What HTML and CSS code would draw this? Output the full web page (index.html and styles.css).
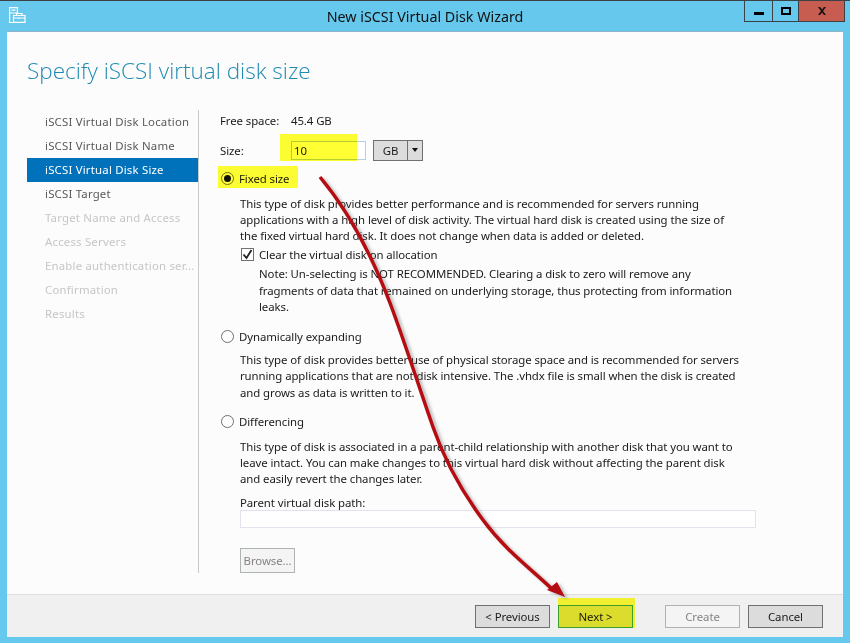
FILE: index.html
```html
<!DOCTYPE html>
<html lang="en">
<head>
<meta charset="utf-8">
<title>New iSCSI Virtual Disk Wizard</title>
<link rel="stylesheet" href="styles.css">
</head>
<body>
<div class="window">
  <header class="titlebar">
    <svg class="app-icon" width="17" height="17" viewBox="0 0 17 17" fill="none" stroke="#fff" stroke-width="1.200">
      <path d="M.6 .6h7.800v5.400h-7.800zM.6 6v9.500h3.500M2.500 3.200h4" />
      <path d="M4.500 8.500h11.500v6.900h-11.500zM7.500 8.500v-2h5.500v2M4.500 11h11.500M10 10.500v1.500"/>
    </svg>
    <h1 class="title">New iSCSI Virtual Disk Wizard</h1>
    <div class="controls">
      <div class="ctl ctl-min"><span class="glyph-min"></span></div>
      <div class="ctl ctl-max"><span class="glyph-max"></span></div>
      <div class="ctl ctl-close">
        <svg width="10" height="8" viewBox="0 0 10 8"><path d="M1 0h2l2 2.500 2-2.500h2l-3 4 3 4h-2l-2-2.500-2 2.500h-2l3-4z" fill="#111"/></svg>
      </div>
    </div>
  </header>
  <div class="client">
    <h2 class="heading">Specify iSCSI virtual disk size</h2>
    <div class="body">
      <nav class="steps">
        <div class="step">iSCSI Virtual Disk Location</div>
        <div class="step">iSCSI Virtual Disk Name</div>
        <div class="step step-on">iSCSI Virtual Disk Size</div>
        <div class="step">iSCSI Target</div>
        <div class="step step-off">Target Name and Access</div>
        <div class="step step-off">Access Servers</div>
        <div class="step step-off">Enable authentication ser...</div>
        <div class="step step-off">Confirmation</div>
        <div class="step step-off">Results</div>
      </nav>
      <main class="form">
        <div class="row row-free"><span class="label">Free space:</span><span>45.4 GB</span></div>
        <div class="row row-size">
          <span class="label">Size:</span>
          <div class="input">10</div>
          <div class="combo"><span class="combo-val">GB</span><span class="combo-btn"><span class="caret"></span></span></div>
        </div>
        <div class="radio-row radio-fixed"><span class="radio radio-on"></span>Fixed size</div>
        <div class="sub">
          <p class="para para-fixed">This type of disk provides better performance and is recommended for servers running<br>applications with a high level of disk activity. The virtual hard disk is created using the size of<br>the fixed virtual hard disk. It does not change when data is added or deleted.</p>
          <div class="check-row"><span class="check"><svg width="11" height="11" viewBox="0 0 11 11"><path d="M1.500 5.500l3 3.500 5-8" fill="none" stroke="#222" stroke-width="1.800"/></svg></span>Clear the virtual disk on allocation</div>
          <p class="note">Note: Un-selecting is NOT RECOMMENDED. Clearing a disk to zero will remove any<br>fragments of data that remained on underlying storage, thus protecting from information<br>leaks.</p>
        </div>
        <div class="radio-row radio-dyn"><span class="radio"></span>Dynamically expanding</div>
        <div class="sub">
          <p class="para para-dyn">This type of disk provides better use of physical storage space and is recommended for servers<br>running applications that are not disk intensive. The .vhdx file is small when the disk is created<br>and grows as data is written to it.</p>
        </div>
        <div class="radio-row radio-diff"><span class="radio"></span>Differencing</div>
        <div class="sub">
          <p class="para para-diff">This type of disk is associated in a parent-child relationship with another disk that you want to<br>leave intact. You can make changes to this virtual hard disk without affecting the parent disk<br>and easily revert the changes later.</p>
          <div class="path-label">Parent virtual disk path:</div>
          <div class="path-input"></div>
          <div class="btn btn-browse">Browse...</div>
        </div>
      </main>
    </div>
    <footer class="footer">
      <div class="btn btn-foot">&lt; Previous</div>
      <div class="btn btn-foot btn-next">Next &gt;</div>
      <div class="btn btn-foot btn-create">Create</div>
      <div class="btn btn-foot btn-cancel">Cancel</div>
    </footer>
  </div>
  <div class="hl hl-size"></div>
  <div class="hl hl-fixed"></div>
  <div class="hl hl-next"></div>
  <svg class="arrow" width="850" height="643" viewBox="0 0 850 643">
    <defs><filter id="sh" x="-10%" y="-10%" width="120%" height="120%"><feGaussianBlur stdDeviation="1.500"/></filter></defs>
    <g transform="translate(3 2)" opacity=".35" filter="url(#sh)">
      <path d="M320 177C350 213 374 261 390 303C404 340 419 387 433 427C444 459 463 493 483 520C505 550 530 568 552 589" fill="none" stroke="#444" stroke-width="3.500"/>
      <path d="M565 597L547 590L557 582z" fill="#444"/>
    </g>
    <path d="M320 177C350 213 374 261 390 303C404 340 419 387 433 427C444 459 463 493 483 520C505 550 530 568 552 589" fill="none" stroke="#b50d12" stroke-width="3.500"/>
    <path d="M565 597L547 590L557 582z" fill="#b50d12"/>
  </svg>
</div>
</body>
</html>
```
FILE: styles.css
```css
* { box-sizing: border-box; }
html, body { margin: 0; padding: 0; }
body { font-family: "Noto Sans", "Open Sans", sans-serif; font-size: 11.4px; letter-spacing: -.08px; color: #1a1a1a; background: #65c8ec; }
.window { position: relative; width: 850px; height: 643px; overflow: hidden; background: #65c8ec; border-top: 1px solid #3c4145; display: flex; flex-direction: column; }
.titlebar { height: 30px; display: flex; position: relative; flex: none; align-items: center; justify-content: center; }
.app-icon { position: absolute; left: 9px; top: 6px; }
.title { margin: 0; font-size: 14.3px; letter-spacing: 0; font-weight: 400; color: #111; }
.controls { position: absolute; right: 5px; top: 0; height: 21px; display: flex; border: 1px solid #3c4145; border-top: 0; }
.ctl { display: flex; align-items: center; justify-content: center; height: 20px; }
.ctl-min { width: 28px; border-right: 1px solid #3c4145; }
.ctl-max { width: 26px; border-right: 1px solid #3c4145; }
.ctl-close { width: 45px; background: #c75c50; }
.glyph-min { display: block; width: 10px; height: 3px; background: #000; margin-top: 5px; }
.glyph-max { display: block; width: 10px; height: 8px; border: 2px solid #000; }
.client { margin: 0 7px 6px; flex: 1; background: #fcfcfc; display: flex; flex-direction: column; border-top: 1px solid #8fb6c6; }
.heading { margin: 0; padding: 23px 0 0 20px; height: 78px; font-family: "Open Sans", sans-serif; font-size: 22.5px; letter-spacing: 0; font-weight: 300; color: #1f8bb0; white-space: nowrap; line-height: 32px; }
.body { display: flex; flex: 1; min-height: 0; }
.steps { width: 192px; padding: 0 0 0 20px; flex: none; height: 463px; border-right: 1px solid #c9c9c9; }
.step { width: 171px; height: 24px; line-height: 24px; padding-left: 18px; color: #595959; white-space: nowrap; letter-spacing: .2px; }
.step-on { background: #0072bc; color: #fff; }
.step-off { color: #c6c6c6; }
.form { padding: 0 0 0 21px; flex: 1; min-width: 0; }
.row { display: flex; align-items: center; }
.row-free { height: 20px; }
.label { width: 71px; flex: none; }
.row-size { height: 24px; margin-top: 8px; }
.input { width: 75px; height: 19px; line-height: 17px; border: 1px solid #b4cfe3; padding-left: 2px; background: #fff; }
.combo { display: flex; width: 50px; height: 21px; margin-left: 7px; border: 1px solid #707070; background: #dcdcdc; }
.combo-val { width: 33px; text-align: center; line-height: 19px; }
.combo-btn { flex: 1; border-left: 1px solid #707070; display: flex; align-items: center; justify-content: center; }
.caret { width: 0; height: 0; border-left: 3.500px solid transparent; border-right: 3.500px solid transparent; border-top: 4px solid #111; }
.radio-row { display: flex; align-items: center; height: 20px; }
.radio-fixed { margin-top: 6px; }
.radio-dyn { margin-top: 11px; }
.radio-diff { margin-top: 10px; }
.radio { width: 13px; height: 13px; border-radius: 50%; border: 1px solid #6f6f6f; background: #fff; margin: 0 5px 0 1px; flex: none; position: relative; }
.radio-on::after { content: ""; position: absolute; left: 2px; top: 2px; width: 7px; height: 7px; border-radius: 50%; background: #111; }
.sub { padding-left: 20px; }
.para, .note { margin: 0; line-height: 16px; white-space: nowrap; }
.para-fixed { padding-top: 8px; }
.para-dyn { padding-top: 5px; line-height: 16.500px; }
.para-diff { padding-top: 8px; }
.check-row { display: flex; align-items: center; height: 20px; }
.check { width: 13px; height: 13px; border: 1px solid #707070; margin: 0 5px 0 1px; background: #fff; display: flex; align-items: center; justify-content: center; }
.note { padding-left: 19px; padding-top: 2px; line-height: 16.500px; }
.path-label { margin-top: 9px; line-height: 14px; }
.path-input { width: 516px; height: 18px; border: 1px solid #e3e3ee; background: #fff; }
.btn { display: flex; align-items: center; justify-content: center; height: 23px; width: 75px; border: 1px solid #707070; background: #dcdcdc; flex: none; }
.btn-browse { width: 55px; height: 25px; margin-top: 20px; background: #f4f4f4; border-color: #adb2b5; color: #838383; }
.footer { height: 43px; background: #f0f0f0; border-top: 1px solid #dfdfdf; display: flex; align-items: flex-start; padding: 10px 0 0 468px; flex: none; }
.btn-next { margin-left: 8px; border-color: #3c9fd0; }
.btn-create { margin-left: 32px; background: #f4f4f4; border-color: #adb2b5; color: #838383; }
.btn-cancel { margin-left: 8px; }
.hl { position: absolute; background: #ffff33; mix-blend-mode: multiply; }
.hl-size { left: 280px; top: 133px; width: 77px; height: 27px; }
.hl-fixed { left: 218px; top: 165px; width: 80px; height: 22px; }
.hl-next { left: 558px; top: 597px; width: 77px; height: 30px; }
.arrow { position: absolute; left: 0; top: -1px; pointer-events: none; }
```
